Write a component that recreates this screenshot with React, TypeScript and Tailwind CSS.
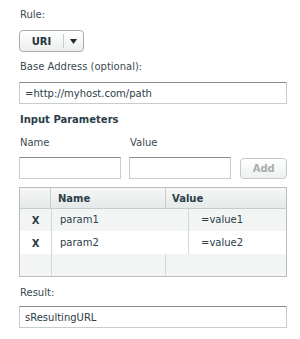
import React from "react";

const font = { fontFamily: '"DejaVu Sans", Verdana, sans-serif' };

function Field({ value, className = "" }: { value?: string; className?: string }) {
  return (
    <div
      className={`h-[22px] border border-[#c9cccc] border-t-[#8a8d8d] bg-white px-[5px] flex items-center text-[10px] text-[#2b3d47] ${className}`}
    >
      {value}
    </div>
  );
}

export default function App() {
  return (
    <div className="w-[300px] h-[339px] bg-white pl-[19px] pr-[13px] pt-[8px] text-[10px] text-[#3a4a50]" style={font}>
      <div className="h-[13px] leading-[13px] pl-px">Rule:</div>
      <div className="mt-[9px] flex">
        <div className="h-[22px] w-[65px] rounded-[4px] border border-[#a8abab] bg-gradient-to-b from-white to-[#eceeee] flex items-center">
          <span className="w-[43px] text-center font-bold text-[10px] text-[#1f3340]">URI</span>
          <span className="h-[14px] w-px bg-[#c8cbcb]" />
          <span className="flex-1 flex justify-center">
            <svg width="7" height="5" viewBox="0 0 7 5"><path d="M0 0h7L3.5 5z" fill="#1f2a30" /></svg>
          </span>
        </div>
      </div>
      <div className="mt-[8px] h-[13px] leading-[13px] pl-px">Base Address (optional):</div>
      <Field value="=http://myhost.com/path" className="mt-[9px]" />
      <div className="mt-[9px] h-[13px] leading-[13px] pl-px font-bold text-[#2b3d47]">Input Parameters</div>
      <div className="mt-[10px] flex h-[13px] leading-[13px]">
        <div className="w-[111px] pl-px">Name</div>
        <div>Value</div>
      </div>
      <div className="mt-[8px] flex items-start">
        <Field className="w-[103px]" />
        <Field className="w-[103px] ml-[8px]" />
        <div className="ml-[9px] mt-px w-[47px] h-[21px] rounded-[4px] border border-[#c6c9c9] bg-gradient-to-b from-white to-[#eef0f0] flex items-center justify-center font-bold text-[#a9adad]">
          Add
        </div>
      </div>
      <div className="mt-[8px] border border-[#b9bcbc] text-[#2b3d47]">
        <div className="flex h-[21px] bg-gradient-to-b from-[#f6f7f7] to-[#e6e9e9] border-b border-[#c9cccc] font-bold">
          <div className="w-[31px] border-r border-[#c9cccc]" />
          <div className="w-[115px] border-r border-[#c9cccc] pl-[7px] flex items-center">Name</div>
          <div className="flex-1 pl-[6px] flex items-center">Value</div>
        </div>
        <div className="flex h-[22px] bg-[#f3f5f5]">
          <div className="w-[31px] flex justify-center pt-[4px] font-bold">X</div>
          <div className="w-[137px] border-l border-[#d4d7d7] pl-[8px] pt-[3px]">param1</div>
          <div className="flex-1 border-l border-[#d4d7d7] pl-[12px] pt-[3px]">=value1</div>
        </div>
        <div className="flex h-[23px] bg-white">
          <div className="w-[31px] flex justify-center pt-[5px] font-bold">X</div>
          <div className="w-[137px] border-l border-[#d4d7d7] pl-[8px] pt-[4px]">param2</div>
          <div className="flex-1 border-l border-[#d4d7d7] pl-[12px] pt-[4px]">=value2</div>
        </div>
        <div className="flex h-[22px] bg-[#f3f5f5]">
          <div className="w-[31px]" />
          <div className="w-[115px] border-l border-r border-[#d4d7d7]" />
          <div className="flex-1" />
        </div>
      </div>
      <div className="mt-[9px] h-[13px] leading-[13px] pl-px">Result:</div>
      <Field value="sResultingURL" className="mt-[7px]" />
    </div>
  );
}
